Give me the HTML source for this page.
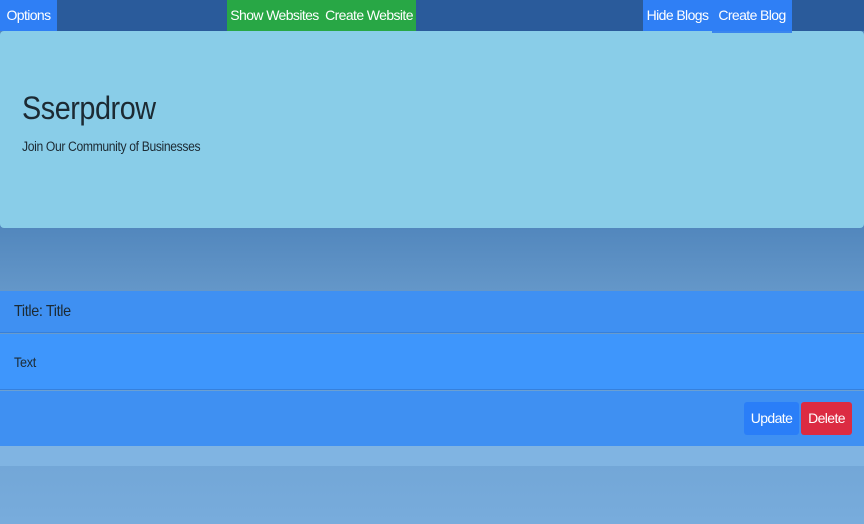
<!DOCTYPE html>
<html><head><meta charset="utf-8"><style>
*{margin:0;padding:0;box-sizing:border-box}
body{width:864px;height:524px;overflow:hidden;font-family:"Liberation Sans",sans-serif;background:linear-gradient(#5287bd 228px,#6497c9 291px,#78acdc 524px);position:relative}
.a{position:absolute}
.nav{top:0;left:0;width:864px;height:31px;background:#2a5b9b}
.btn{position:absolute;top:0;height:31px;line-height:30px;color:#fff;font-size:14px;text-align:center;letter-spacing:-0.6px}
.jum{top:31px;left:0;width:864px;height:197px;background:#89cde8;border-radius:4px}
.s{transform-origin:left top;transform:scaleX(0.9);white-space:nowrap}
</style></head><body>
<div class="a jum"></div>
<div class="a nav"></div>
<div class="btn" style="left:0;width:57px;background:#2f7ff5">Options</div>
<div class="btn" style="left:227px;width:189px;background:#28a745;word-spacing:0"><span style="display:inline-block;width:95px">Show Websites</span><span style="display:inline-block;width:94px">Create Website</span></div>
<div class="btn" style="left:643px;width:69px;background:#2f7ff5">Hide Blogs</div>
<div class="btn" style="left:712px;width:80px;height:33px;background:#2f7ff5;border-bottom:2px solid #3a86ee">Create Blog</div>
<div class="a s" style="left:22px;top:90px;font-size:32px;color:#1c2a33;letter-spacing:-0.5px">Sserpdrow</div>
<div class="a s" style="left:22px;top:139px;font-size:13.5px;color:#1c2a33;letter-spacing:-0.4px">Join Our Community of Businesses</div>
<div class="a" style="left:0;top:291px;width:864px;height:42px;background:#3f90f2;border-bottom:1px solid #3680dc"></div>
<div class="a s" style="left:14px;top:303px;font-size:16px;color:#1c2a33;letter-spacing:-0.4px">Title: Title</div>
<div class="a" style="left:0;top:334px;width:864px;height:56px;background:#3e96fc;border-bottom:1px solid #3680dc"></div>
<div class="a s" style="left:14px;top:354px;font-size:14px;color:#1c2a33;letter-spacing:-0.3px">Text</div>
<div class="a" style="left:0;top:391px;width:864px;height:55px;background:#3f90f2"></div>
<div class="a" style="left:0;top:446px;width:864px;height:20px;background:#80b4e2"></div>
<div class="btn" style="top:402px;left:744px;width:55px;height:33px;line-height:33px;background:#2a7ef8;border-radius:3px">Update</div>
<div class="btn" style="top:402px;left:801px;width:51px;height:33px;line-height:33px;background:#dc2b42;border-radius:3px">Delete</div>
</body></html>
